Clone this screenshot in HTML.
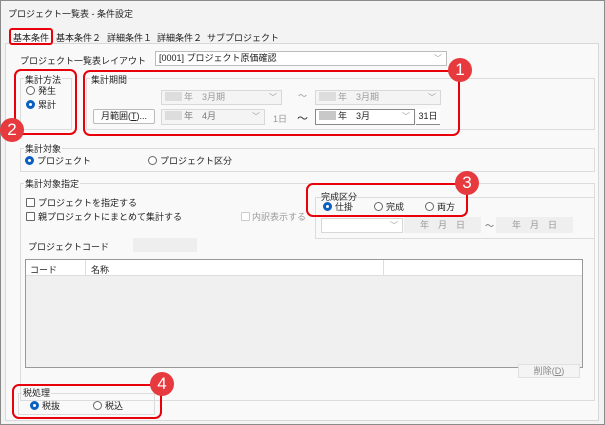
<!DOCTYPE html>
<html><head><meta charset="utf-8"><style>
*{box-sizing:border-box;margin:0;padding:0}
body{width:605px;height:425px;overflow:hidden;background:#f3f3f3;font-family:"Liberation Sans","Noto Sans CJK JP",sans-serif;font-size:9px;color:#222;position:relative}
.a{position:absolute;white-space:nowrap}
.grp{position:absolute;border:1px solid #dcdcdc}
.sel{position:absolute;background:#fff;border:1px solid #bcbcbc;font-size:9px;line-height:13px;padding-left:3px}
.sel.dis{background:#f4f4f4;border-color:#d8d8d8;color:#999}
.sel .dd{position:absolute;right:4px;top:0;color:#999;font-size:8px}
.gb{display:inline-block;width:17px;height:9px;background:#c8c8c8;vertical-align:-1px;margin-right:2px}
.rb{position:absolute;width:9px;height:9px;border-radius:50%;border:1px solid #666;background:#fff}
.rb.on{border:3px solid #0a5fc0}
.cb{position:absolute;width:9px;height:9px;border:1px solid #666;background:#fff;border-radius:1px}
.red{position:absolute;border:2.5px solid #e8000b;border-radius:7px}
.bd{position:absolute;width:24px;height:24px;border-radius:50%;background:#e63a3f;color:#fff;font-size:17px;line-height:24px;text-align:center;font-family:"Liberation Sans",sans-serif}
</style></head><body>
<div class="a" style="left:0;top:0;width:605px;height:425px;border:1px solid #8a8a8a"></div>
<div class="a" style="left:8px;top:7px;font-size:9px">プロジェクト一覧表 - 条件設定</div>
<div class="a" style="left:5px;top:43px;width:594px;height:378px;background:#f9f9f9;border:1px solid #d8d8d8"></div>
<div class="a" style="left:9px;top:29px;width:44px;height:15px;background:#f9f9f9"></div>
<div class="a" style="left:13px;top:31px">基本条件</div>
<div class="a" style="left:56px;top:31px">基本条件２</div>
<div class="a" style="left:107px;top:31px">詳細条件１</div>
<div class="a" style="left:157px;top:31px">詳細条件２</div>
<div class="a" style="left:207px;top:31px">サブプロジェクト</div>
<div class="red" style="left:9px;top:28px;width:44px;height:17px;border-radius:3px"></div>

<div class="a" style="left:20px;top:54px;font-size:9px">プロジェクト一覧表レイアウト</div>
<div class="sel" style="left:155px;top:51px;width:292px;height:15px;color:#222">[0001] プロジェクト原価確認<span class="dd">﹀</span></div>

<div class="grp" style="left:20px;top:78px;width:52px;height:52px"></div>
<div class="a" style="left:24px;top:73px;background:#f9f9f9;padding:0 1px">集計方法</div>
<div class="rb" style="left:26px;top:86px"></div><div class="a" style="left:38px;top:84px">発生</div>
<div class="rb on" style="left:26px;top:100px"></div><div class="a" style="left:38px;top:98px">累計</div>

<div class="grp" style="left:86px;top:78px;width:509px;height:52px"></div>
<div class="a" style="left:90px;top:73px;background:#f9f9f9;padding:0 1px">集計期間</div>
<div class="sel dis" style="left:161px;top:90px;width:121px;height:15px"><span class="gb" style="background:#ddd"></span>年　3月期<span class="dd">﹀</span></div>
<div class="a" style="left:298px;top:89px;color:#999">～</div>
<div class="sel dis" style="left:315px;top:90px;width:126px;height:15px"><span class="gb" style="background:#ddd"></span>年　3月期<span class="dd">﹀</span></div>
<div class="a" style="left:93px;top:109px;width:62px;height:15px;border:1px solid #bbb;background:#fdfdfd;border-radius:2px;text-align:center;line-height:13px">月範囲(<u>T</u>)...</div>
<div class="sel dis" style="left:161px;top:109px;width:104px;height:16px;color:#777"><span class="gb" style="background:#ddd"></span>年　4月<span class="dd">﹀</span></div>
<div class="a" style="left:273px;top:112px;color:#999">1日</div>
<div class="a" style="left:297px;top:110px;font-size:11px">～</div>
<div class="sel" style="left:315px;top:109px;width:100px;height:16px;border-color:#888"><span class="gb"></span>年　3月<span class="dd">﹀</span></div>
<div class="a" style="left:416px;top:109px;width:24px;height:16px;background:#fff;border-bottom:1px solid #888;text-align:center;line-height:15px">31日</div>
<div class="red" style="left:83px;top:70px;width:377px;height:66px"></div>
<div class="red" style="left:14px;top:69px;width:63px;height:66px"></div>
<div class="bd" style="left:448px;top:58px">1</div>
<div class="bd" style="left:0px;top:118px">2</div>

<div class="grp" style="left:20px;top:148px;width:575px;height:24px"></div>
<div class="a" style="left:24px;top:142px;background:#f9f9f9;padding:0 1px">集計対象</div>
<div class="rb on" style="left:25px;top:156px"></div><div class="a" style="left:37px;top:154px">プロジェクト</div>
<div class="rb" style="left:148px;top:156px"></div><div class="a" style="left:160px;top:154px">プロジェクト区分</div>

<div class="grp" style="left:20px;top:183px;width:575px;height:218px"></div>
<div class="a" style="left:24px;top:177px;background:#f9f9f9;padding:0 1px">集計対象指定</div>
<div class="cb" style="left:26px;top:198px"></div><div class="a" style="left:38px;top:196px">プロジェクトを指定する</div>
<div class="cb" style="left:26px;top:212px"></div><div class="a" style="left:38px;top:210px">親プロジェクトにまとめて集計する</div>
<div class="cb" style="left:241px;top:212px;border-color:#ccc"></div><div class="a" style="left:252px;top:210px;color:#999">内訳表示する</div>

<div class="grp" style="left:315px;top:197px;width:280px;height:42px"></div>
<div class="a" style="left:321px;top:190px">完成区分</div>
<div class="rb on" style="left:323px;top:202px"></div><div class="a" style="left:335px;top:200px">仕掛</div>
<div class="rb" style="left:374px;top:202px"></div><div class="a" style="left:386px;top:200px">完成</div>
<div class="rb" style="left:425px;top:202px"></div><div class="a" style="left:437px;top:200px">両方</div>
<div class="sel dis" style="left:321px;top:218px;width:82px;height:15px;background:#fff"><span class="dd">﹀</span></div>
<div class="a" style="left:404px;top:217px;width:77px;height:16px;background:#efefef;color:#999;text-align:center;line-height:16px">年　月　日</div>
<div class="a" style="left:485px;top:219px;color:#666">～</div>
<div class="a" style="left:496px;top:217px;width:77px;height:16px;background:#efefef;color:#999;text-align:center;line-height:16px">年　月　日</div>
<div class="red" style="left:306px;top:183px;width:162px;height:34px"></div>
<div class="bd" style="left:455px;top:171px">3</div>

<div class="a" style="left:28px;top:240px">プロジェクトコード</div>
<div class="a" style="left:133px;top:238px;width:64px;height:14px;background:#eee"></div>
<div class="a" style="left:25px;top:259px;width:558px;height:109px;border:1px solid #999;background:#f0f0f0"></div>
<div class="a" style="left:26px;top:260px;width:556px;height:16px;background:#fff;border-bottom:1px solid #ddd"></div>
<div class="a" style="left:85px;top:260px;width:1px;height:16px;background:#ddd"></div>
<div class="a" style="left:383px;top:260px;width:1px;height:16px;background:#ddd"></div>
<div class="a" style="left:30px;top:263px">コード</div>
<div class="a" style="left:91px;top:263px">名称</div>
<div class="a" style="left:518px;top:364px;width:62px;height:14px;background:#f4f4f4;border:1px solid #e0e0e0;color:#888;text-align:center;line-height:12px">削除(<u>D</u>)</div>

<div class="grp" style="left:18px;top:393px;width:137px;height:22px"></div>
<div class="a" style="left:22px;top:386px;background:#f9f9f9;padding:0 1px">税処理</div>
<div class="rb on" style="left:30px;top:401px"></div><div class="a" style="left:42px;top:399px">税抜</div>
<div class="rb" style="left:93px;top:401px"></div><div class="a" style="left:105px;top:399px">税込</div>
<div class="red" style="left:12px;top:384px;width:150px;height:35px"></div>
<div class="bd" style="left:150px;top:372px">4</div>
</body></html>
